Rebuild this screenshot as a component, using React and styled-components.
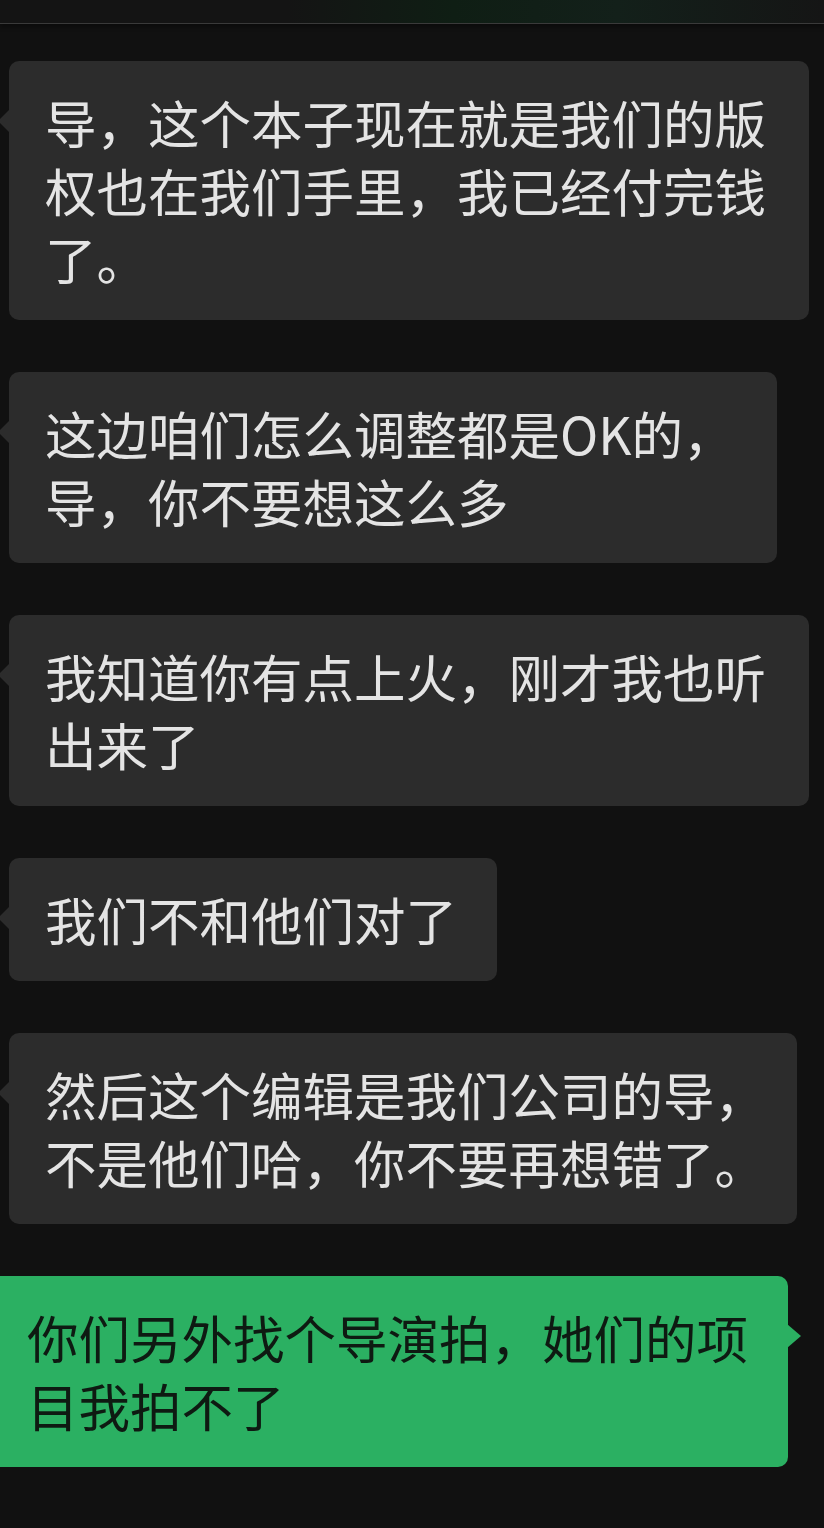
import React from 'react';
import styled, { createGlobalStyle } from 'styled-components';

const messages = [
  { from: 'them', w: 800, lines: ['导，这个本子现在就是我们的版', '权也在我们手里，我已经付完钱', '了。'] },
  { from: 'them', w: 768, lines: ['这边咱们怎么调整都是OK的，', '导，你不要想这么多'] },
  { from: 'them', w: 800, lines: ['我知道你有点上火，刚才我也听', '出来了'] },
  { from: 'them', w: 488, lines: ['我们不和他们对了'] },
  { from: 'them', w: 788, lines: ['然后这个编辑是我们公司的导，', '不是他们哈，你不要再想错了。'] },
  { from: 'me', w: 797, lines: ['你们另外找个导演拍，她们的项', '目我拍不了'] },
];

export default function App() {
  return (
    <>
      <GlobalStyle />
      <Page>
        <TopBar />
        <Thread>
          {messages.map((m, i) => (
            <Bubble key={i} $mine={m.from === 'me'} $w={m.w}>
              <Tail $mine={m.from === 'me'} />
              {m.lines.map((l, j) => (
                <Line key={j}>{l}</Line>
              ))}
            </Bubble>
          ))}
        </Thread>
      </Page>
    </>
  );
}

const GlobalStyle = createGlobalStyle`
  html, body {
    margin: 0;
    padding: 0;
    background: #111111;
    overflow-x: hidden;
  }
`;

const Page = styled.div`
  width: 824px;
  min-height: 1528px;
  background: #111111;
  overflow: hidden;
  font-family: "Noto Sans CJK SC", "Noto Sans", sans-serif;
`;

const TopBar = styled.div`
  height: 23px;
  background: linear-gradient(90deg, #141414 0%, #141414 35%, #0f1e14 55%, #13201a 75%, #151515 100%);
  border-bottom: 1px solid #3a3a3a;
  box-shadow: 0 3px 4px rgba(0, 0, 0, 0.35);
`;

const Thread = styled.div`
  display: flex;
  flex-direction: column;
  gap: 52px;
  padding-top: 37px;
`;

const Bubble = styled.div`
  position: relative;
  box-sizing: border-box;
  width: ${p => p.$w}px;
  padding: 27px 0 28px 36px;
  border-radius: 10px;
  background: ${p => (p.$mine ? '#2bb062' : '#2c2c2c')};
  color: ${p => (p.$mine ? '#0e1a12' : '#e4e4e4')};
  margin-left: ${p => (p.$mine ? '-9px' : '9px')};
`;

const Tail = styled.span`
  position: absolute;
  top: 48px;
  width: 0;
  height: 0;
  border-top: 12px solid transparent;
  border-bottom: 12px solid transparent;
  ${p =>
    p.$mine
      ? `right: -13px; border-left: 14px solid #2bb062;`
      : `left: -11px; border-right: 12px solid #2c2c2c;`}
`;

const Line = styled.div`
  font-size: 51.5px;
  line-height: 68px;
  white-space: nowrap;
`;
